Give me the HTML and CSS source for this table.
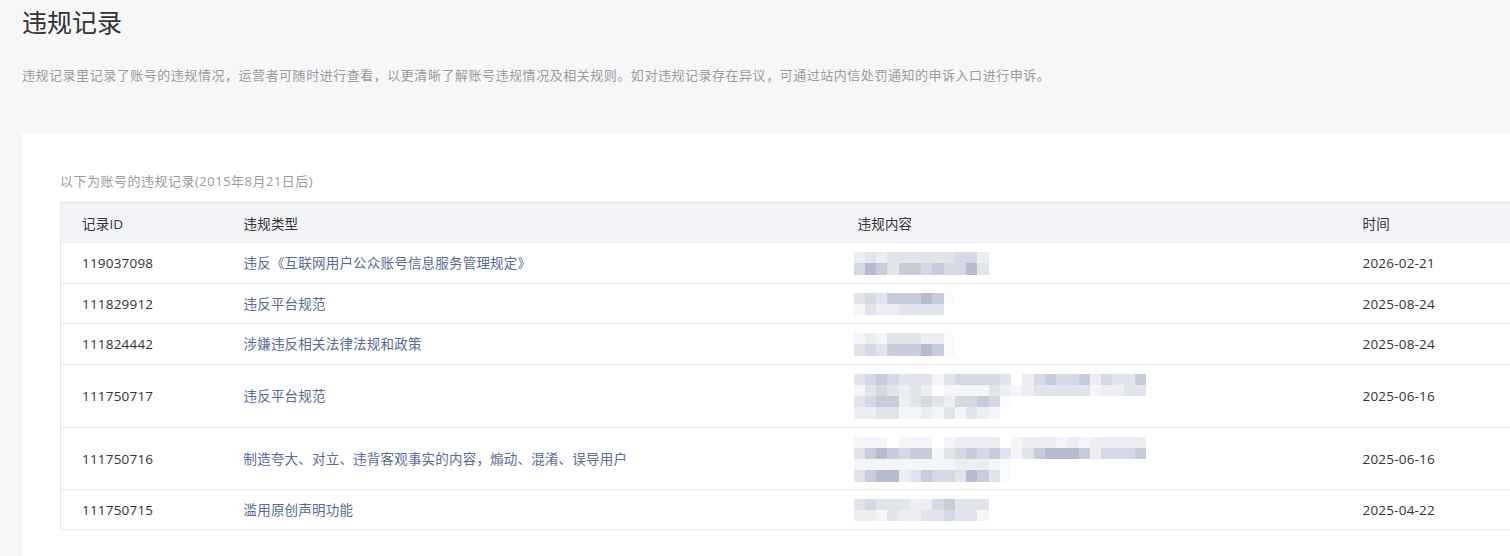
FILE: index.html
```html
<!DOCTYPE html>
<html lang="zh-CN">
<head>
<meta charset="utf-8">
<title>违规记录</title>
<link rel="stylesheet" href="styles.css">
</head>
<body>
<div class="page">
  <h1 class="title">违规记录</h1>
  <p class="desc">违规记录里记录了账号的违规情况，运营者可随时进行查看，以更清晰了解账号违规情况及相关规则。如对违规记录存在异议，可通过站内信处罚通知的申诉入口进行申诉。</p>
  <div class="card">
    <p class="sub">以下为账号的违规记录(2015年8月21日后)</p>
    <table class="tbl">
      <colgroup>
        <col class="c-id"><col class="c-type"><col class="c-content"><col class="c-time">
      </colgroup>
      <thead>
        <tr><th>记录ID</th><th>违规类型</th><th>违规内容</th><th>时间</th></tr>
      </thead>
      <tbody>
        <tr>
          <td class="num">119037098</td>
          <td><a class="lnk">违反《互联网用户公众账号信息服务管理规定》</a></td>
          <td><div class="mz">
            <div class="ln"><i class="b"></i><i class="c"></i><i class="b"></i><i class="c"></i><i class="c"></i><i class="c"></i><i class="c"></i><i class="c"></i><i class="c"></i><i class="d"></i><i class="d"></i><i class="b"></i></div>
            <div class="ln"><i class="d"></i><i class="f"></i><i class="e"></i><i class="c"></i><i class="e"></i><i class="e"></i><i class="d"></i><i class="e"></i><i class="d"></i><i class="d"></i><i class="f"></i><i class="c"></i></div>
          </div></td>
          <td class="num">2026-02-21</td>
        </tr>
        <tr>
          <td class="num">111829912</td>
          <td><a class="lnk">违反平台规范</a></td>
          <td><div class="mz">
            <div class="ln"><i class="c"></i><i class="d"></i><i class="c"></i><i class="e"></i><i class="e"></i><i class="e"></i><i class="f"></i><i class="e"></i><i class="h"></i></div>
            <div class="ln"><i class="a"></i><i class="c"></i><i class="b"></i><i class="b"></i><i class="c"></i><i class="c"></i><i class="c"></i><i class="c"></i><i class="w"></i></div>
          </div></td>
          <td class="num">2025-08-24</td>
        </tr>
        <tr>
          <td class="num">111824442</td>
          <td><a class="lnk">涉嫌违反相关法律法规和政策</a></td>
          <td><div class="mz">
            <div class="ln"><i class="a"></i><i class="b"></i><i class="a"></i><i class="c"></i><i class="c"></i><i class="c"></i><i class="b"></i><i class="b"></i><i class="h"></i></div>
            <div class="ln"><i class="c"></i><i class="d"></i><i class="c"></i><i class="e"></i><i class="e"></i><i class="e"></i><i class="f"></i><i class="e"></i><i class="h"></i></div>
          </div></td>
          <td class="num">2025-08-24</td>
        </tr>
        <tr>
          <td class="num">111750717</td>
          <td><a class="lnk">违反平台规范</a></td>
          <td><div class="mz">
            <div class="ln"><i class="c"></i><i class="d"></i><i class="e"></i><i class="d"></i><i class="c"></i><i class="c"></i><i class="c"></i><i class="a"></i><i class="c"></i><i class="d"></i><i class="d"></i><i class="d"></i><i class="d"></i><i class="c"></i><i class="w"></i><i class="b"></i><i class="d"></i><i class="e"></i><i class="d"></i><i class="d"></i><i class="e"></i><i class="b"></i><i class="d"></i><i class="c"></i><i class="c"></i><i class="e"></i></div>
            <div class="ln"><i class="a"></i><i class="c"></i><i class="d"></i><i class="c"></i><i class="b"></i><i class="c"></i><i class="b"></i><i class="w"></i><i class="a"></i><i class="a"></i><i class="a"></i><i class="a"></i><i class="c"></i><i class="b"></i><i class="a"></i><i class="b"></i><i class="c"></i><i class="c"></i><i class="c"></i><i class="c"></i><i class="c"></i><i class="a"></i><i class="b"></i><i class="b"></i><i class="c"></i><i class="c"></i></div>
            <div class="ln"><i class="c"></i><i class="d"></i><i class="e"></i><i class="e"></i><i class="b"></i><i class="c"></i><i class="d"></i><i class="c"></i><i class="b"></i><i class="d"></i><i class="d"></i><i class="e"></i><i class="d"></i><i class="h"></i></div>
            <div class="ln"><i class="b"></i><i class="b"></i><i class="c"></i><i class="c"></i><i class="a"></i><i class="a"></i><i class="b"></i><i class="a"></i><i class="c"></i><i class="a"></i><i class="c"></i><i class="b"></i><i class="a"></i></div>
          </div></td>
          <td class="num">2025-06-16</td>
        </tr>
        <tr>
          <td class="num">111750716</td>
          <td><a class="lnk">制造夸大、对立、违背客观事实的内容，煽动、混淆、误导用户</a></td>
          <td><div class="mz">
            <div class="ln"><i class="a"></i><i class="a"></i><i class="a"></i><i class="w"></i><i class="a"></i><i class="a"></i><i class="a"></i><i class="w"></i><i class="a"></i><i class="b"></i><i class="b"></i><i class="b"></i><i class="b"></i><i class="w"></i><i class="a"></i><i class="b"></i><i class="b"></i><i class="b"></i><i class="a"></i><i class="b"></i><i class="a"></i><i class="b"></i><i class="b"></i><i class="b"></i><i class="b"></i><i class="b"></i></div>
            <div class="ln"><i class="c"></i><i class="e"></i><i class="f"></i><i class="e"></i><i class="d"></i><i class="e"></i><i class="e"></i><i class="a"></i><i class="c"></i><i class="d"></i><i class="e"></i><i class="d"></i><i class="e"></i><i class="c"></i><i class="a"></i><i class="c"></i><i class="e"></i><i class="f"></i><i class="f"></i><i class="f"></i><i class="e"></i><i class="b"></i><i class="d"></i><i class="d"></i><i class="d"></i><i class="e"></i></div>
            <div class="ln"><i class="a"></i><i class="a"></i><i class="a"></i><i class="a"></i><i class="a"></i><i class="a"></i><i class="a"></i><i class="a"></i><i class="a"></i><i class="b"></i><i class="b"></i><i class="b"></i><i class="a"></i><i class="h"></i></div>
            <div class="ln"><i class="c"></i><i class="e"></i><i class="f"></i><i class="f"></i><i class="b"></i><i class="c"></i><i class="e"></i><i class="d"></i><i class="d"></i><i class="c"></i><i class="f"></i><i class="e"></i><i class="c"></i><i class="h"></i></div>
          </div></td>
          <td class="num">2025-06-16</td>
        </tr>
        <tr>
          <td class="num">111750715</td>
          <td><a class="lnk">滥用原创声明功能</a></td>
          <td><div class="mz">
            <div class="ln"><i class="c"></i><i class="d"></i><i class="c"></i><i class="c"></i><i class="c"></i><i class="b"></i><i class="b"></i><i class="d"></i><i class="e"></i><i class="c"></i><i class="c"></i><i class="c"></i></div>
            <div class="ln"><i class="b"></i><i class="b"></i><i class="a"></i><i class="c"></i><i class="b"></i><i class="b"></i><i class="c"></i><i class="c"></i><i class="d"></i><i class="c"></i><i class="c"></i><i class="a"></i></div>
          </div></td>
          <td class="num">2025-04-22</td>
        </tr>
      </tbody>
    </table>
  </div>
</div>
</body>
</html>
```
FILE: styles.css
```css
html, body {
  margin: 0;
  padding: 0;
  background: #f6f7f9;
  overflow: hidden;
}

body {
  font-family: "Open Sans", "Noto Sans CJK SC", sans-serif;
  color: #333;
}

.page {
  width: 1540px;
  padding-left: 22px;
  box-sizing: border-box;
}

.title {
  margin: 0;
  padding-top: 7px;
  font-size: 25px;
  line-height: 30px;
  font-weight: normal;
  color: #333;
}

.desc {
  margin: 28px 0 0;
  font-size: 13px;
  line-height: 20px;
  letter-spacing: 0.53px;
  color: #9b9b9b;
}

.card {
  margin-top: 48px;
  background: #fff;
  padding: 38px 0 40px 38px;
}

.sub {
  margin: 0 0 11px;
  font-size: 13px;
  line-height: 20px;
  letter-spacing: 0.5px;
  color: #9b9b9b;
}

.tbl {
  width: 1480px;
  border-collapse: collapse;
  table-layout: fixed;
  border: 1px solid #e6e7eb;
  font-size: 13.5px;
  letter-spacing: 0.2px;
}

.c-id { width: 162px; }
.c-type { width: 614px; }
.c-content { width: 505px; }

.tbl th {
  background: #f3f4f7;
  height: 39px;
  padding: 0 21px;
  text-align: left;
  font-weight: normal;
  color: #333;
  border-bottom: 1px solid #e6e7eb;
}

.tbl td {
  padding: 9px 21px 8px;
  line-height: 22px;
  vertical-align: middle;
  border-bottom: 1px solid #e8e8ea;
  color: #333;
  white-space: nowrap;
}

.tbl tbody tr:nth-child(5) td {
  padding-bottom: 7px;
}

.lnk {
  color: #576b95;
  text-decoration: none;
}

.mz {
  margin-left: -4px;
  display: flex;
  flex-direction: column;
}

.ln {
  display: flex;
}

.ln i {
  display: block;
  width: 11.25px;
  height: 11.25px;
}

.ln .a { background: #f4f5f8; }
.ln .b { background: #eceef2; }
.ln .c { background: #e2e4eb; }
.ln .d { background: #d5d9e3; }
.ln .e { background: #c7ccdb; }
.ln .f { background: #b5bcd0; }
.ln .h { background: #f9fafc; }
.ln .w { background: transparent; }
```
